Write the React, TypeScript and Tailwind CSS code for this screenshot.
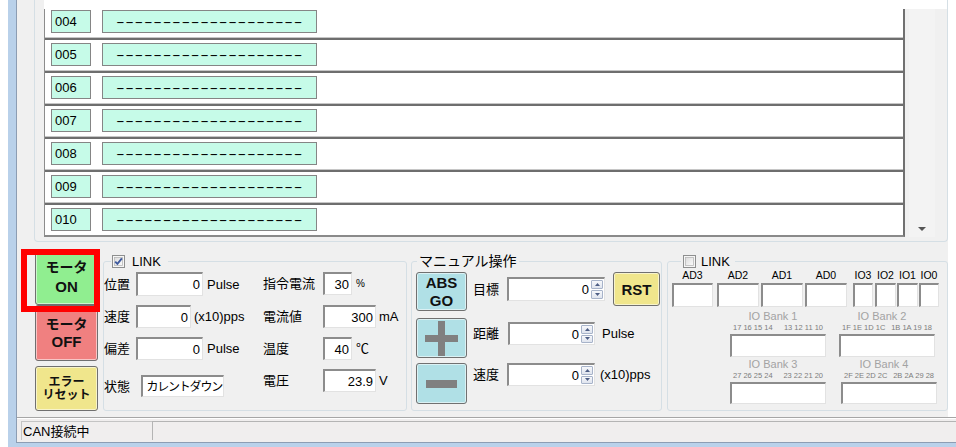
import React from "react";

const SUNK =
  "bg-white border-t-2 border-l-2 border-r border-b border-t-[#8c8c8c] border-l-[#8c8c8c] border-r-[#e2e2e2] border-b-[#e2e2e2]";

const BTN =
  "rounded-[3px] border border-[#707070] shadow-[inset_0_0_0_1px_rgba(255,255,255,0.55)] flex flex-col items-center justify-center font-bold text-[#111]";

function CheckBox({ checked }: { checked?: boolean }) {
  return (
    <svg width="13" height="13" viewBox="0 0 13 13" className="shrink-0">
      <defs>
        <linearGradient id={checked ? "cbg1" : "cbg2"} x1="0" y1="0" x2="1" y2="1">
          <stop offset="0" stopColor="#dcdcdc" />
          <stop offset="1" stopColor="#fbfbfb" />
        </linearGradient>
      </defs>
      <rect x="0.5" y="0.5" width="12" height="12" fill="#f6f6f6" stroke="#8e8f8f" />
      <rect x="2.5" y="2.5" width="8" height="8" fill={`url(#${checked ? "cbg1" : "cbg2"})`} stroke="#b8b8b8" strokeWidth="0.8" />
      {checked && (
        <path d="M3.2 6.6 L5.4 8.9 L9.9 3.4" fill="none" stroke="#3f5a9e" strokeWidth="1.9" />
      )}
    </svg>
  );
}

function Field({ cls, value, left }: { cls: string; value: string; left?: boolean }) {
  return (
    <div
      className={`${SUNK} ${cls} flex items-center ${left ? "justify-start" : "justify-end pr-[2px]"} text-[13px] leading-none`}
    >
      {value}
    </div>
  );
}

function SpinBtn({ up }: { up?: boolean }) {
  return (
    <div className="flex-1 flex items-center justify-center rounded-[1px] border border-[#a7b3c9] bg-linear-to-b from-[#f7f8fb] to-[#dfe4ee]">
      <svg width="5" height="3" viewBox="0 0 5 3">
        <path d={up ? "M0 3 L2.5 0 L5 3Z" : "M0 0 L2.5 3 L5 0Z"} fill="#4d5e85" />
      </svg>
    </div>
  );
}

function Spin({ cls }: { cls: string }) {
  return (
    <div className={`${SUNK} ${cls} flex items-stretch`}>
      <div className="flex-1 flex items-center justify-end pr-[2px] text-[13px] leading-none">0</div>
      <div className="w-[13px] flex flex-col gap-px py-px pr-px">
        <SpinBtn up />
        <SpinBtn />
      </div>
    </div>
  );
}

const NUMS = ["004", "005", "006", "007", "008", "009", "010"];

function ListRow({ num, first }: { num: string; first?: boolean }) {
  return (
    <div>
      {!first && <div className="h-[3px] border-t border-[#c6c6c6] bg-[#6e6e6e]" />}
      <div className={`flex items-center pl-[6px] ${first ? "pt-[1px]" : "pt-[3px]"} pb-[4px]`}>
        <div className="w-[40px] h-[23px] border border-[#858585] bg-[#c6fbe8] pl-[3px] flex items-center text-[13px] leading-none">
          {num}
        </div>
        <div className="ml-[11px] w-[215px] h-[23px] border border-[#858585] bg-[#c6fbe8] flex items-center justify-center overflow-hidden">
          <span className="inline-block scale-y-50 -translate-y-[1px] text-[26px] leading-none tracking-[0.7px] whitespace-nowrap">
            --------------------
          </span>
        </div>
      </div>
    </div>
  );
}

function Bank({ label, a, b, boxH }: { label: string; a: string; b: string; boxH: string }) {
  return (
    <div className="w-[96px] flex flex-col">
      <div className="h-[12px] leading-[12px] text-center pr-[10px] text-[11px] text-[#a3a3a3]">{label}</div>
      <div className="mt-[1px] h-[10px] leading-[10px] flex justify-between px-[3px] text-[7.5px] text-[#7d7d7d] whitespace-pre">
        <span>{a}</span>
        <span>{b}</span>
      </div>
      <div className={`mt-[1px] ${boxH} ${SUNK}`} />
    </div>
  );
}

function IoCol({ label, w }: { label: string; w: string }) {
  return (
    <div className={`${w} flex flex-col items-center`}>
      <div className="h-[12px] leading-[12px] text-[10.5px] whitespace-nowrap">{label}</div>
      <div className={`mt-[2px] h-[24px] w-full ${SUNK}`} />
    </div>
  );
}

export default function App() {
  return (
    <div className="relative w-[956px] h-[447px] overflow-hidden bg-white flex font-['Liberation_Sans','Noto_Sans_CJK_JP',sans-serif] text-[13px] text-black">
      <div className="w-[8px] bg-white" />
      <div className="flex-1 bg-[#b9d1ea] pl-[8px] pb-[4px] flex flex-col">
        <div className="flex-1 bg-[#f0f0f0] border-l border-b border-[#8c9db3] flex flex-col">
          {/* upper panel */}
          <div className="h-[243px] flex">
            <div className="w-[17px]" />
            <div className="w-[914px] h-[242px] border-l border-r border-b border-[#d5dfe5] rounded-b-[4px] flex flex-col pl-[9px]">
              <div className="h-[9px] bg-white" />
              <div className="flex h-[228px]">
                <div className="w-[861px] h-[228px] bg-white border-l border-[#8c8c8c] border-r-2 border-r-[#707070] border-b-2 border-b-[#8a8a8a] flex flex-col">
                  {NUMS.map((n, i) => (
                    <ListRow key={n} num={n} first={i === 0} />
                  ))}
                </div>
                <div className="w-[4px]" />
                <div className="w-[26px] h-[228px] bg-[#f3f3f3] flex flex-col justify-end items-center pb-[6px]">
                  <svg width="8" height="4" viewBox="0 0 8 4">
                    <path d="M0 0 L8 0 L4 4Z" fill="#555" />
                  </svg>
                </div>
              </div>
            </div>
            <div className="flex-1 bg-white" />
          </div>

          {/* lower controls */}
          <div className="h-[174px] flex">
            <div className="w-[18px]" />
            <div className="w-[63px] flex flex-col pt-[6px]">
              <div className={`${BTN} h-[56px] bg-[#90ee90]`}>
                <span className="text-[14px] leading-[19px]">モータ</span>
                <span className="text-[15px] leading-[19px]">ON</span>
              </div>
              <div className={`${BTN} h-[56px] bg-[#f08080]`}>
                <span className="text-[14px] leading-[18px]">モータ</span>
                <span className="text-[15px] leading-[18px]">OFF</span>
              </div>
              <div className={`${BTN} mt-[5px] h-[45px] bg-[#f0e68c]`}>
                <span className="text-[12px] leading-[13px]">エラー</span>
                <span className="text-[12px] leading-[13px]">リセット</span>
              </div>
            </div>
            <div className="w-[5px]" />

            {/* LINK group */}
            <fieldset className="mt-[10px] w-[304px] h-[158px] rounded-[3px] border border-[#d5dfe5]">
              <legend className="ml-[7px] pl-[1px] pr-[7px] h-[16px]">
                <span className="flex items-center h-[16px] gap-[7px]">
                  <CheckBox checked />
                  <span className="text-[13px] leading-none">LINK</span>
                </span>
              </legend>
              <div className="flex pt-[3px] leading-none">
                <div className="w-[159px] flex flex-col">
                  <div className="flex items-center h-[24px]">
                    <span className="w-[32px]">位置</span>
                    <Field cls="w-[67px] h-[24px]" value="0" />
                    <span className="ml-[4px]">Pulse</span>
                  </div>
                  <div className="flex items-center h-[23px] mt-[9px]">
                    <span className="w-[32px]">速度</span>
                    <Field cls="w-[55px] h-[23px]" value="0" />
                    <span className="ml-[3px] whitespace-nowrap">(x10)pps</span>
                  </div>
                  <div className="flex items-center h-[23px] mt-[9px]">
                    <span className="w-[32px]">偏差</span>
                    <Field cls="w-[67px] h-[23px]" value="0" />
                    <span className="ml-[4px]">Pulse</span>
                  </div>
                  <div className="flex items-center h-[22px] mt-[15px]">
                    <span className="w-[37px]">状態</span>
                    <div className={`${SUNK} w-[83px] h-[22px] flex items-center justify-end pr-px text-[12px] tracking-[-1.2px] whitespace-nowrap overflow-hidden`}>
                      カレントダウン
                    </div>
                  </div>
                </div>
                <div className="flex flex-col">
                  <div className="flex items-center h-[23px]">
                    <span className="w-[60px]">指令電流</span>
                    <Field cls="w-[29px] h-[23px]" value="30" />
                    <span className="ml-[4px] text-[10px]">%</span>
                  </div>
                  <div className="flex items-center h-[23px] mt-[10px]">
                    <span className="w-[60px]">電流値</span>
                    <Field cls="w-[53px] h-[23px]" value="300" />
                    <span className="ml-[3px]">mA</span>
                  </div>
                  <div className="flex items-center h-[23px] mt-[9px]">
                    <span className="w-[60px]">温度</span>
                    <Field cls="w-[29px] h-[23px]" value="40" />
                    <span className="ml-[4px]">℃</span>
                  </div>
                  <div className="flex items-center h-[23px] mt-[9px]">
                    <span className="w-[60px]">電圧</span>
                    <Field cls="w-[53px] h-[23px]" value="23.9" />
                    <span className="ml-[3px]">V</span>
                  </div>
                </div>
              </div>
            </fieldset>
            <div className="w-[4px]" />

            {/* Manual group */}
            <fieldset className="mt-[10px] w-[251px] h-[158px] rounded-[3px] border border-[#d5dfe5]">
              <legend className="ml-[5px] px-[2px] h-[16px]">
                <span className="block text-[14px] leading-[16px]">マニュアル操作</span>
              </legend>
              <div className="flex pt-[3px] pl-[4px] leading-none">
                <div className="w-[51px] flex flex-col">
                  <div className={`${BTN} h-[39px] bg-[#b0e0e6]`}>
                    <span className="text-[15px] leading-[18px]">ABS</span>
                    <span className="text-[15px] leading-[18px]">GO</span>
                  </div>
                  <div className={`${BTN} mt-[7px] h-[40px] bg-[#b0e0e6]`}>
                    <svg width="33" height="35" viewBox="0 0 33 35">
                      <rect x="0" y="14" width="33" height="7" fill="#808080" />
                      <rect x="13" y="0" width="7" height="35" fill="#808080" />
                    </svg>
                  </div>
                  <div className={`${BTN} mt-[5px] h-[41px] bg-[#b0e0e6]`}>
                    <svg width="31" height="8" viewBox="0 0 31 8">
                      <rect x="0" y="0" width="31" height="8" fill="#808080" />
                    </svg>
                  </div>
                </div>
                <div className="ml-[6px] flex flex-col">
                  <div className="flex items-center h-[34px]">
                    <span className="w-[34px]">目標</span>
                    <Spin cls="w-[98px] h-[24px]" />
                    <div className={`${BTN} ml-[8px] w-[47px] h-[34px] bg-[#f0e68c]`}>
                      <span className="text-[15px] leading-none">RST</span>
                    </div>
                  </div>
                  <div className="flex items-center h-[23px] mt-[16px]">
                    <span className="w-[35px]">距離</span>
                    <Spin cls="w-[87px] h-[23px]" />
                    <span className="ml-[7px]">Pulse</span>
                  </div>
                  <div className="flex items-center h-[23px] mt-[18px]">
                    <span className="w-[34px]">速度</span>
                    <Spin cls="w-[88px] h-[23px]" />
                    <span className="ml-[5px] whitespace-nowrap">(x10)pps</span>
                  </div>
                </div>
              </div>
            </fieldset>
            <div className="w-[5px]" />

            {/* IO group */}
            <fieldset className="mt-[10px] w-[281px] h-[158px] rounded-[3px] border border-[#d5dfe5]">
              <legend className="ml-[13px] px-[2px] pr-[5px] h-[16px]">
                <span className="flex items-center h-[16px] gap-[5px]">
                  <CheckBox />
                  <span className="text-[13px] leading-none">LINK</span>
                </span>
              </legend>
              <div className="flex pl-[4px]">
                <IoCol label="AD3" w="w-[41px]" />
                <div className="w-[4px]" />
                <IoCol label="AD2" w="w-[42px]" />
                <div className="w-[2px]" />
                <IoCol label="AD1" w="w-[42px]" />
                <div className="w-[2px]" />
                <IoCol label="AD0" w="w-[42px]" />
                <div className="w-[6px]" />
                <IoCol label="IO3" w="w-[20px]" />
                <div className="w-[2px]" />
                <IoCol label="IO2" w="w-[21px]" />
                <div className="w-[1px]" />
                <IoCol label="IO1" w="w-[21px]" />
                <div className="w-[1px]" />
                <IoCol label="IO0" w="w-[20px]" />
              </div>
              <div className="flex ml-[62px] mt-[3px]">
                <Bank label="IO Bank 1" a="17 16 15 14" b="13 12 11 10" boxH="h-[23px]" />
                <div className="w-[13px]" />
                <Bank label="IO Bank 2" a="1F 1E 1D 1C" b="1B 1A 19 18" boxH="h-[23px]" />
              </div>
              <div className="flex ml-[62px] mt-[1px]">
                <Bank label="IO Bank 3" a="27 26 25 24" b="23 22 21 20" boxH="h-[22px]" />
                <div className="w-[15px]" />
                <Bank label="IO Bank 4" a="2F 2E 2D 2C" b="2B 2A 29 28" boxH="h-[22px]" />
              </div>
            </fieldset>
            <div className="flex-1 bg-white" />
          </div>

          {/* status bar */}
          <div className="h-[25px] border-t border-[#a6a6a6] bg-[#f0eeee] flex flex-col">
            <div className="h-px bg-white" />
            <div className="flex pl-[4px] pt-[2px] h-[22px]">
              <div className="w-[131px] h-[19px] border-t border-l border-[#c4c4c4] flex items-center pl-[1px] text-[13px] leading-none">
                CAN接続中
              </div>
              <div className="flex-1 h-[19px] border-t border-l border-[#b4b4b4]" />
            </div>
          </div>
        </div>
      </div>

      {/* red annotation frame */}
      <div className="absolute left-[21px] top-[249px] w-[79px] h-[63px] border-[6px] border-[#ff0000] pointer-events-none" />
    </div>
  );
}
